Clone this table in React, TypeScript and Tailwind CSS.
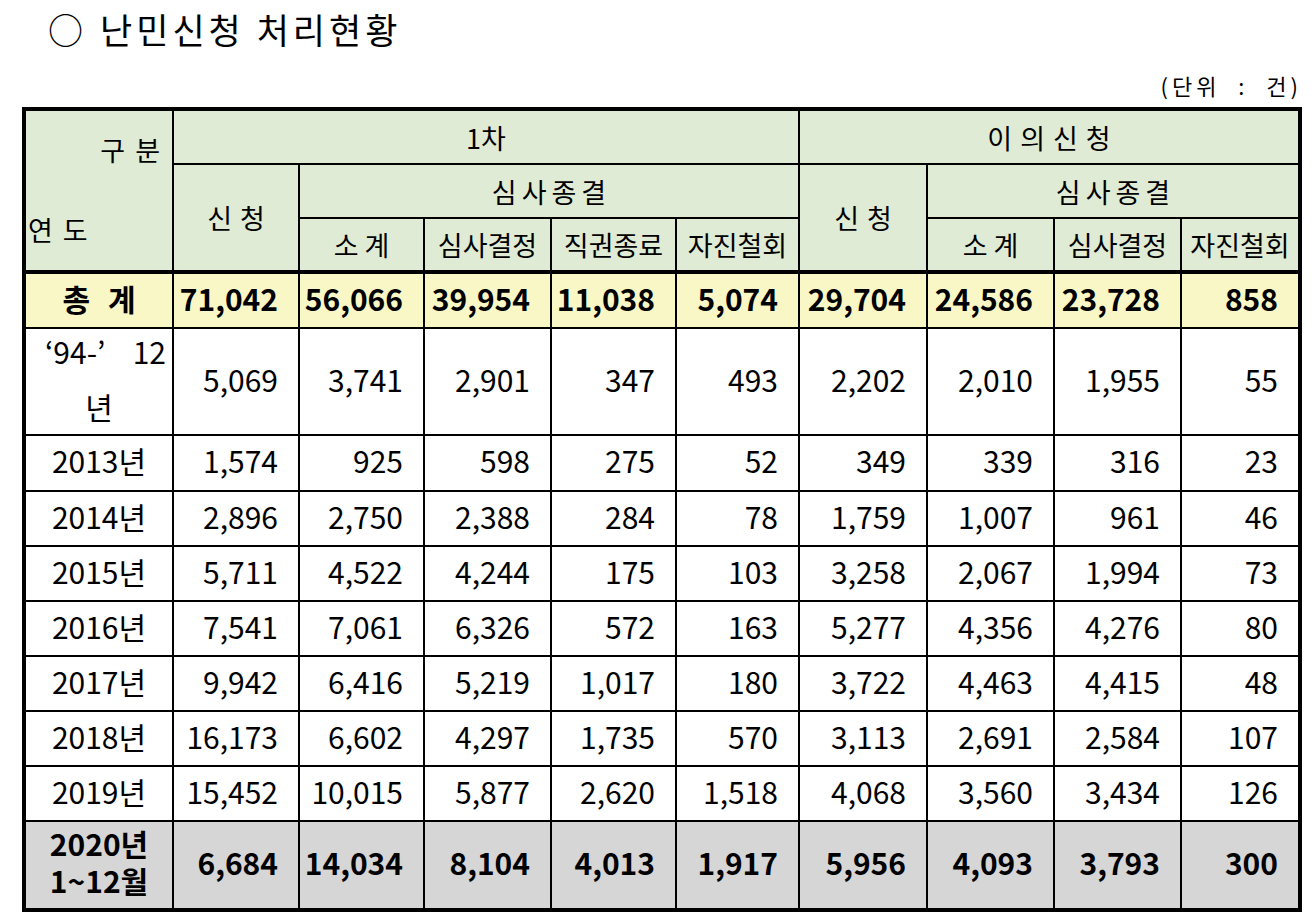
import React from "react";

const rows: { label: React.ReactNode; vals: string[]; kind?: "total" | "last" | "multi" }[] = [
  { label: "총 계", vals: ["71,042", "56,066", "39,954", "11,038", "5,074", "29,704", "24,586", "23,728", "858"], kind: "total" },
  { label: "'94", vals: ["5,069", "3,741", "2,901", "347", "493", "2,202", "2,010", "1,955", "55"], kind: "multi" },
  { label: "2013년", vals: ["1,574", "925", "598", "275", "52", "349", "339", "316", "23"] },
  { label: "2014년", vals: ["2,896", "2,750", "2,388", "284", "78", "1,759", "1,007", "961", "46"] },
  { label: "2015년", vals: ["5,711", "4,522", "4,244", "175", "103", "3,258", "2,067", "1,994", "73"] },
  { label: "2016년", vals: ["7,541", "7,061", "6,326", "572", "163", "5,277", "4,356", "4,276", "80"] },
  { label: "2017년", vals: ["9,942", "6,416", "5,219", "1,017", "180", "3,722", "4,463", "4,415", "48"] },
  { label: "2018년", vals: ["16,173", "6,602", "4,297", "1,735", "570", "3,113", "2,691", "2,584", "107"] },
  { label: "2019년", vals: ["15,452", "10,015", "5,877", "2,620", "1,518", "4,068", "3,560", "3,434", "126"] },
  { label: "2020", vals: ["6,684", "14,034", "8,104", "4,013", "1,917", "5,956", "4,093", "3,793", "300"], kind: "last" },
];

const H = "bg-[#e0ebd5] flex items-center justify-center text-[27px] leading-none";

export default function App() {
  return (
    <div className="w-[1316px] h-[922px] bg-white text-black font-['Noto_Sans_CJK_KR',sans-serif]">
      <div className="h-[56px] flex items-center pl-[48px] text-[35px] leading-none">
        <span>○</span>
        <span className="ml-[17px] tracking-[4px]">난민신청 처리현황</span>
      </div>
      <div className="h-[51px] w-[1302px] flex items-center justify-end pt-[6px] text-[22px] leading-none tracking-[4px]">
        (단위&nbsp;&nbsp;:&nbsp;&nbsp;건)
      </div>
      <div className="ml-[22px] w-[1280px] border-4 border-black bg-black grid gap-[2px] grid-cols-[146px_124px_123px_125px_123px_121px_126px_125px_125px_116px] grid-rows-[52px_52px_51px_55px_105px_54px_53px_53px_53px_53px_53px_53px_86px]">
        {/* header */}
        <div className="row-span-3 bg-[#e0ebd5] flex flex-col justify-between pt-[24px] pb-[25px] text-[27px] leading-[30px]">
          <div className="text-right pr-[12px] tracking-[10px] -mr-[10px]">구분</div>
          <div className="pl-[2px] tracking-[10px]">연도</div>
        </div>
        <div className={`col-span-5 ${H}`}>1차</div>
        <div className={`col-span-4 ${H} tracking-[8px] pl-[8px]`}>이의신청</div>
        <div className={`row-span-2 ${H} tracking-[8px] pl-[8px]`}>신청</div>
        <div className={`col-span-4 ${H} tracking-[5px] pl-[5px]`}>심사종결</div>
        <div className={`row-span-2 ${H} tracking-[8px] pl-[8px]`}>신청</div>
        <div className={`col-span-3 ${H} tracking-[5px] pl-[5px]`}>심사종결</div>
        <div className={`${H} tracking-[6px] pl-[6px]`}>소계</div>
        <div className={H}>심사결정</div>
        <div className={H}>직권종료</div>
        <div className={H}>자진철회</div>
        <div className={`${H} tracking-[6px] pl-[6px]`}>소계</div>
        <div className={H}>심사결정</div>
        <div className={H}>자진철회</div>

        {rows.map((r, i) => {
          const bg =
            r.kind === "total" ? "bg-[#f9f7c6]" : r.kind === "last" ? "bg-[#d6d6d6]" : "bg-white";
          const bold = r.kind === "total" || r.kind === "last" ? "font-bold" : "";
          const topLine = r.kind === "total" ? "border-t-2 border-black" : "";
          let label: React.ReactNode;
          if (r.kind === "multi") {
            label = (
              <div className="w-full flex flex-col leading-[55px]">
                <div className="flex justify-between pl-[19px] pr-[6px]">
                  <span>‘94-’</span>
                  <span>12</span>
                </div>
                <div className="text-center">년</div>
              </div>
            );
          } else if (r.kind === "last") {
            label = (
              <div className="flex flex-col items-center leading-[37px]">
                <span>2020년</span>
                <span>1~12월</span>
              </div>
            );
          } else if (r.kind === "total") {
            label = <span className="tracking-[18px] pl-[18px]">총계</span>;
          } else {
            label = <span>{r.label}</span>;
          }
          return (
            <React.Fragment key={i}>
              <div className={`${bg} ${bold} ${topLine} flex items-center justify-center pb-[6px] text-[30px] leading-none`}>
                {label}
              </div>
              {r.vals.map((v, j) => (
                <div
                  key={j}
                  className={`${bg} ${bold} ${topLine} flex items-center justify-end pr-[20px] pb-[6px] text-[30px] leading-none`}
                >
                  {v}
                </div>
              ))}
            </React.Fragment>
          );
        })}
      </div>
    </div>
  );
}
